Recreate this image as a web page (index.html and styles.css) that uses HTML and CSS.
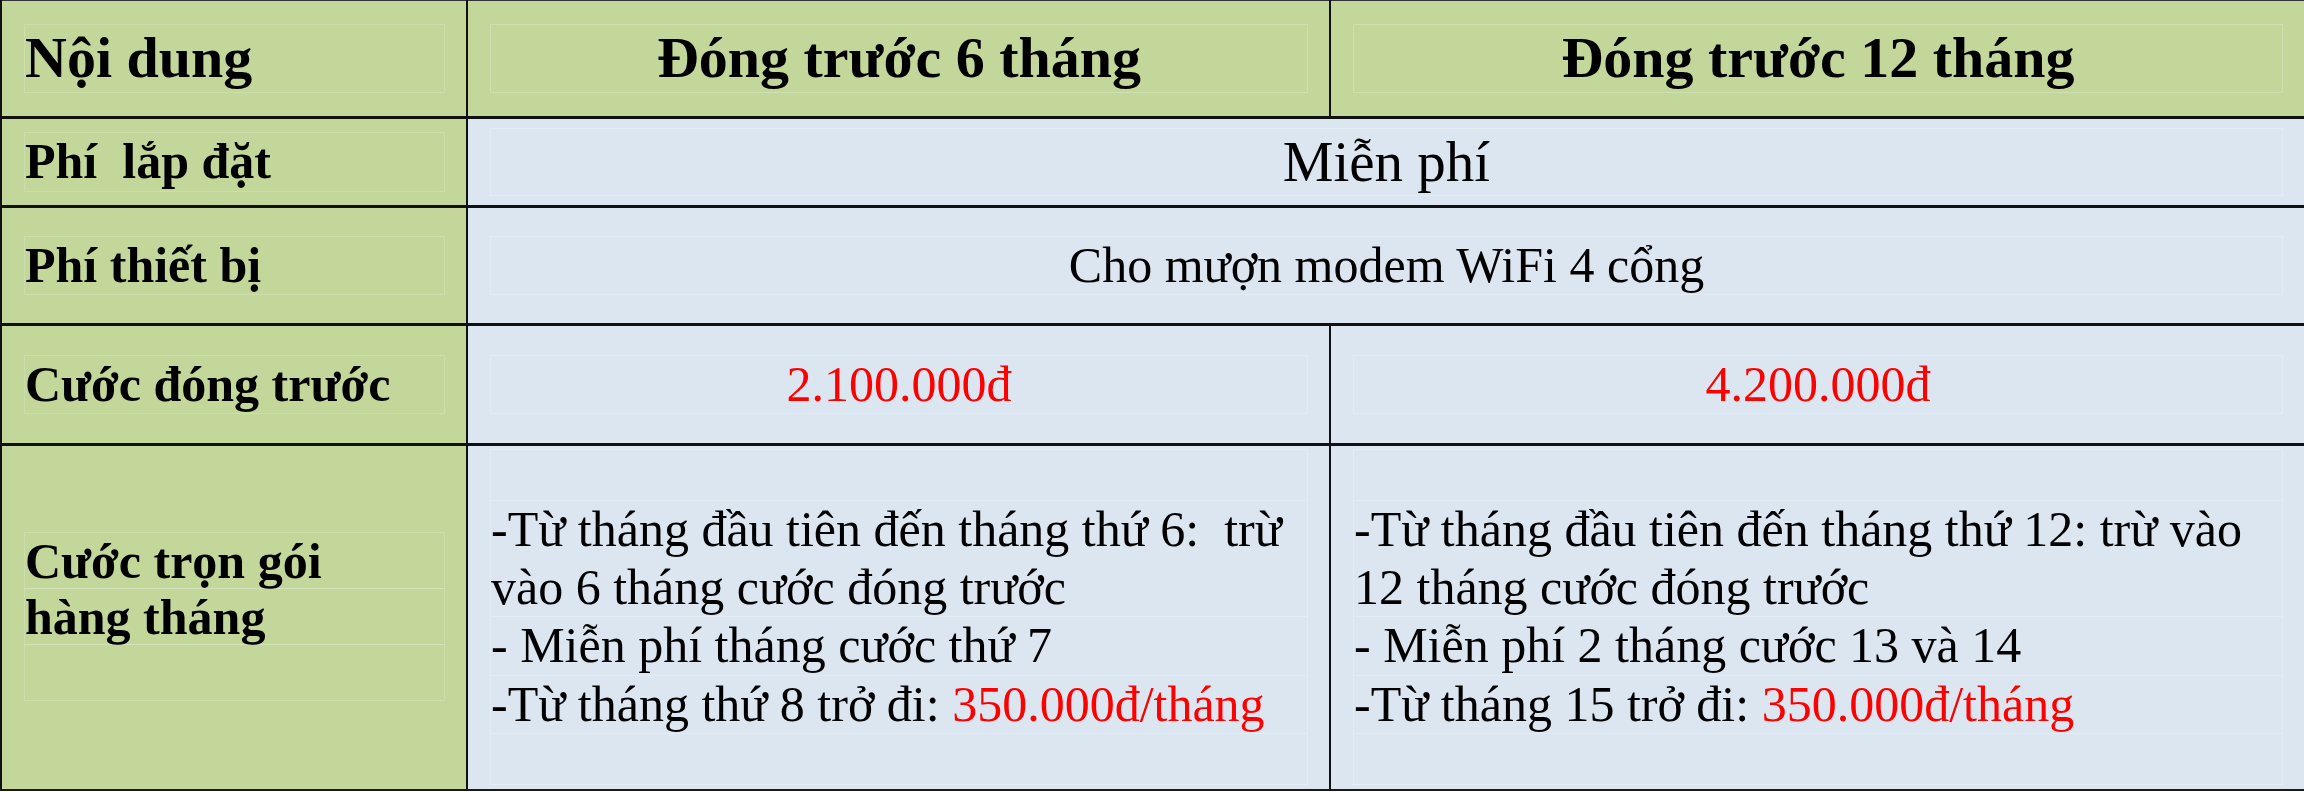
FILE: index.html
```html
<!DOCTYPE html>
<html lang="vi">
<head>
<meta charset="utf-8">
<title>Bảng cước</title>
<link rel="stylesheet" href="styles.css">
</head>
<body>
<table class="price">
  <colgroup>
    <col class="c1">
    <col class="c2">
    <col class="c3">
  </colgroup>
  <tr class="r-head">
    <th class="label"><div class="box">Nội dung</div></th>
    <th class="head"><div class="box">Đóng trước 6 tháng</div></th>
    <th class="head"><div class="box">Đóng trước 12 tháng</div></th>
  </tr>
  <tr class="r-install">
    <td class="label"><div class="box">Phí&nbsp; lắp đặt</div></td>
    <td class="val big" colspan="2"><div class="box">Miễn phí</div></td>
  </tr>
  <tr class="r-device">
    <td class="label"><div class="box">Phí thiết bị</div></td>
    <td class="val" colspan="2"><div class="box">Cho mượn modem WiFi 4 cổng</div></td>
  </tr>
  <tr class="r-prepay">
    <td class="label"><div class="box">Cước đóng trước</div></td>
    <td class="val"><div class="box"><span class="red">2.100.000đ</span></div></td>
    <td class="val"><div class="box"><span class="red">4.200.000đ</span></div></td>
  </tr>
  <tr class="r-monthly">
    <td class="label"><div class="lines"><div class="line">Cước trọn gói</div><div class="line">hàng tháng</div><div class="line"></div></div></td>
    <td class="val detail">
      <div class="frame">
        <div class="para">-Từ tháng đầu tiên đến tháng thứ 6:&nbsp; trừ vào 6 tháng cước đóng trước</div>
        <div class="para">- Miễn phí tháng cước thứ 7</div>
        <div class="para">-Từ tháng thứ 8 trở đi: <span class="red">350.000đ/tháng</span></div>
      </div>
    </td>
    <td class="val detail">
      <div class="frame">
        <div class="para">-Từ tháng đầu tiên đến tháng thứ 12: trừ vào 12 tháng cước đóng trước</div>
        <div class="para">- Miễn phí 2 tháng cước 13 và 14</div>
        <div class="para">-Từ tháng 15 trở đi: <span class="red">350.000đ/tháng</span></div>
      </div>
    </td>
  </tr>
</table>
</body>
</html>
```

FILE: styles.css
```css
html, body {
  margin: 0;
  padding: 0;
  background: #ffffff;
}

body {
  font-family: "Liberation Serif", "Times New Roman", serif;
  color: #000;
  width: 2304px;
  height: 792px;
  overflow: hidden;
}

.price {
  border-collapse: collapse;
  table-layout: fixed;
  width: 2304px;
  border-top: 1px solid #333333;
  border-left: 2px solid #1a1a1a;
  border-right: 2px solid #1a1a1a;
  border-bottom: 2px solid #1a1a1a;
}

.c1 { width: 466px; }
.c2 { width: 863px; }
.c3 { width: 975px; }

.price th,
.price td {
  border-top: 3px solid #111111;
  border-bottom: 3px solid #111111;
  border-left: 2px solid #111111;
  border-right: 2px solid #111111;
  padding: 0 21px 0 22px;
  vertical-align: middle;
  font-size: 50px;
  line-height: 1.15;
}

.price tr:first-child th {
  border-top: 1px solid #333333;
}

.price tr:last-child td {
  border-bottom: 2px solid #1a1a1a;
}

.r-head { height: 117px; }
.r-install { height: 89px; }
.r-device { height: 118px; }
.r-prepay { height: 120px; }
.r-monthly { height: 345px; }

.label {
  background: #c4d79b;
  font-weight: bold;
  text-align: left;
}

th.label {
  font-size: 58px;
}

.head {
  background: #c4d79b;
  font-weight: bold;
  font-size: 58px !important;
  text-align: center;
}

.val {
  background: #dce6f1;
  font-weight: normal;
  text-align: center;
}

.val.big {
  font-size: 57px;
}

.label .box {
  border: 1px solid rgba(255, 255, 255, 0.16);
}

.val .box,
.head .box {
  border: 1px solid rgba(255, 255, 255, 0.2);
}

.red {
  color: #ff0000;
}

.lines {
  display: flex;
  flex-direction: column;
}

.line {
  height: 57px;
  border: 1px solid rgba(255, 255, 255, 0.16);
  margin-top: -1px;
  box-sizing: border-box;
  line-height: 57px;
  white-space: nowrap;
}

.detail {
  padding: 2px 21px 5px 22px;
  text-align: left;
}

.frame {
  height: 336px;
  border: 1px solid rgba(255, 255, 255, 0.2);
  box-sizing: border-box;
  display: flex;
  flex-direction: column;
  justify-content: center;
}

.para {
  border-top: 1px solid rgba(255, 255, 255, 0.2);
  line-height: 57.5px;
}

.para:last-child {
  border-bottom: 1px solid rgba(255, 255, 255, 0.2);
}
```
